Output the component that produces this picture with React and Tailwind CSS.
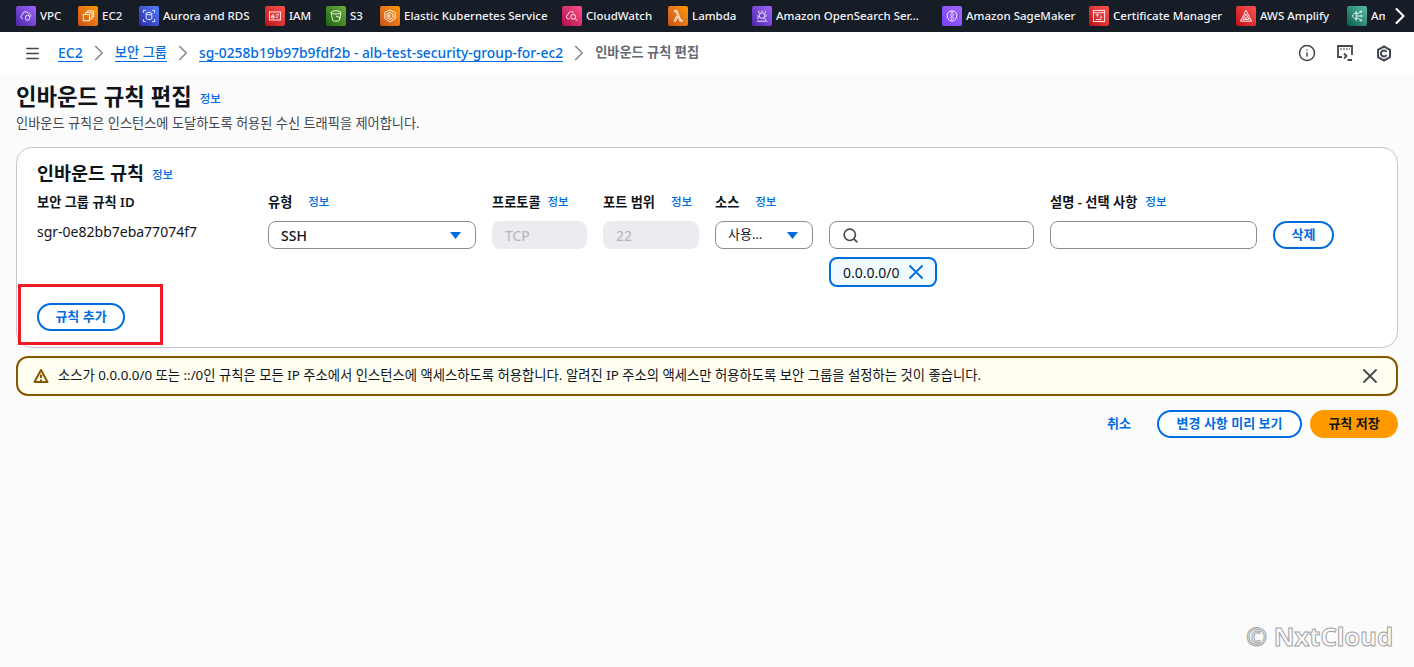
import React from 'react';
import { ChevronRight, X, Search, Menu, Info } from 'lucide-react';

const Font = '[font-family:"Noto_Sans","Noto_Sans_CJK_KR",sans-serif]';

// Service glyphs are simplified versions of the AWS console icons
const glyphs = {
  vpc: (
    <>
      <path d="M6 13.500a2.600 2.600 0 0 1-.4-5.100A4 4 0 0 1 13 6.600a3 3 0 0 1 2.600 4.200" />
      <rect x="9.500" y="9" width="5" height="6.500" rx="2.500" />
    </>
  ),
  ec2: (
    <>
      <rect x="4" y="8" width="8" height="8" />
      <path d="M7 8V5.500h8v8h-3M9.500 5.500V3.500H17v7.500h-2" />
    </>
  ),
  rds: (
    <>
      <ellipse cx="10" cy="7" rx="3.500" ry="1.500" />
      <path d="M6.500 7v6c0 .9 1.600 1.500 3.500 1.500s3.500-.6 3.500-1.500V7M3 6V3h3M17 6V3h-3M3 14v3h3M17 14v3h-3" />
    </>
  ),
  iam: (
    <>
      <rect x="3" y="5" width="14" height="10" />
      <path d="M5.500 12.500v-2h3.500v2zM6.200 10.500V8.600h2.100v1.900M11 8.500h4M11 11.500h3" />
    </>
  ),
  s3: (
    <>
      <path d="M4 5.500c0-1 2.700-2 6-2s6 1 6 2-2.700 2-6 2-6-1-6-2zM4 5.500l1.700 9.500c.3 1 2.200 1.500 4.300 1.500s4-.5 4.300-1.500L16 5.500" />
      <path d="M10 10l6 2.500" />
    </>
  ),
  eks: (
    <>
      <path d="M10 2.500l6.500 3.200v7.500L10 17.500l-6.500-4.300V5.700z" />
      <path d="M10 5.500l3.800 2v4.500L10 14.500 6.200 12V7.500zM8.500 8v4M8.500 10l2.500-2M8.500 10l2.500 2.200" />
    </>
  ),
  cloudwatch: (
    <>
      <path d="M7 13.500H5.500a2.700 2.700 0 0 1-.4-5.300A4 4 0 0 1 12.500 6.500" />
      <circle cx="11.500" cy="11" r="3" />
      <path d="M13.700 13.200l2.800 2.800" />
    </>
  ),
  lambda: <path d="M5 16.500l4.200-8-1.500-4H5.500V3h3l5 12h2v1.500h-3L10 10.500l-3 6z" />,
  opensearch: (
    <>
      <circle cx="10" cy="9.500" r="3.500" />
      <path d="M12.500 12l3 3.500M3.500 16.500h13M6 6.500V3.500M10 5V3M14 6.500V3.500M5 14V9M15 11V8" />
    </>
  ),
  sagemaker: (
    <>
      <path d="M10 3.500C6.500 3.500 4 6 4 9.500c0 3.500 2.500 7 6 7s6-3.500 6-7c0-3.500-2.500-6-6-6z" />
      <path d="M10 3.500v3l-2 2 2 2-2 2 2 2M10 6.500l2 2-2 2 2 2-2 2" />
    </>
  ),
  cert: (
    <>
      <rect x="3" y="3" width="14" height="14" />
      <path d="M3 6h14M6 8.500h4M8 8.500v3M6 14.500h7M12 9.500l1.500 2-2.500 1" />
    </>
  ),
  amplify: <path d="M10 3l7 13.500H3zM10 7.500l-4 7h8zM8 11.500l3.500 3M12 11l-3.500 3.500" />,
  ai: (
    <>
      <path d="M9 4v12M9 6c-2 0-3 1-3 2s-2 1-2 2 1 2 2 2 1 2 3 2" />
      <path d="M9 7h3l2-2M9 10h5M9 13h3l2 2" />
      <circle cx="15" cy="4.500" r="1" />
      <circle cx="15.500" cy="10" r="1" />
      <circle cx="15" cy="15.500" r="1" />
    </>
  ),
};

const services = [
  { name: 'VPC', icon: 'vpc', w: 'w-[46px]', bg: 'bg-gradient-to-tr from-[#4d27a8] to-[#a166ff]' },
  { name: 'EC2', icon: 'ec2', w: 'w-[45px]', bg: 'bg-gradient-to-tr from-[#c8511b] to-[#ff9900]' },
  { name: 'Aurora and RDS', icon: 'rds', w: 'w-[110px]', bg: 'bg-gradient-to-tr from-[#2e27ad] to-[#527fff]' },
  { name: 'IAM', icon: 'iam', w: 'w-[45px]', bg: 'bg-gradient-to-tr from-[#bd0816] to-[#ff5252]' },
  { name: 'S3', icon: 's3', w: 'w-[38px]', bg: 'bg-gradient-to-tr from-[#1b660f] to-[#6cae3e]' },
  { name: 'Elastic Kubernetes Service', icon: 'eks', w: 'w-[166px]', bg: 'bg-gradient-to-tr from-[#c8511b] to-[#ff9900]' },
  { name: 'CloudWatch', icon: 'cloudwatch', w: 'w-[90px]', bg: 'bg-gradient-to-tr from-[#b0084d] to-[#ff4f8b]' },
  { name: 'Lambda', icon: 'lambda', w: 'w-[68px]', bg: 'bg-gradient-to-tr from-[#c8511b] to-[#ff9900]' },
  { name: 'Amazon OpenSearch Ser…', icon: 'opensearch', w: 'w-[174px]', bg: 'bg-gradient-to-tr from-[#4d27a8] to-[#a166ff]' },
  { name: 'Amazon SageMaker', icon: 'sagemaker', w: 'w-[131px]', bg: 'bg-gradient-to-tr from-[#7b3ff2] to-[#a166ff]' },
  { name: 'Certificate Manager', icon: 'cert', w: 'w-[131px]', bg: 'bg-gradient-to-tr from-[#bd0816] to-[#ff5252]' },
  { name: 'AWS Amplify', icon: 'amplify', w: 'w-[95px]', bg: 'bg-gradient-to-tr from-[#bd0816] to-[#ff5252]' },
  { name: 'Amazon Bedrock', icon: 'ai', w: 'w-[120px]', bg: 'bg-gradient-to-tr from-[#055f4e] to-[#56c0a7]' },
];

const ServiceIcon = ({ icon, bg }) => (
  <span className={`w-5 h-5 shrink-0 rounded-[2px] flex items-center justify-center ${bg}`}>
    <svg width="16" height="16" viewBox="0 0 20 20" fill="none" stroke="#fff" strokeWidth="1.100">
      {glyphs[icon]}
    </svg>
  </span>
);

const InfoLink = ({ className = '' }) => (
  <span className={`text-[11.500px] leading-4 font-medium text-[#006ce0] ${className}`}>정보</span>
);

const Label = ({ children, info, gap = 'ml-2' }) => (
  <div className="h-[17px] flex items-center whitespace-nowrap">
    <span className="text-[13.200px] leading-4 font-semibold text-[#0f141a]">{children}</span>
    {info !== false && <InfoLink className={gap} />}
  </div>
);

const Caret = () => (
  <svg width="11" height="7" viewBox="0 0 11 7" className="shrink-0">
    <path d="M0 0h11L5.500 7z" fill="#006ce0" />
  </svg>
);

const fieldBox = 'h-7 mt-[11px] rounded-lg border border-[#8c8c94] bg-white flex items-center';

const Crumb = ({ children, size = 'text-[13.300px]' }) => (
  <span className={`${size} leading-[17px] font-medium text-[#006ce0] border-b-[1.500px] border-[#006ce0] whitespace-nowrap`}>
    {children}
  </span>
);

const Sep = () => <ChevronRight size={26} strokeWidth={1.600} className="text-[#8c8c94] mx-[3px] shrink-0" />;

const RoundButton = ({ children, className = '' }) => (
  <button className={`rounded-full border-2 border-[#006ce0] bg-white text-[#006ce0] text-[13px] font-semibold flex items-center justify-center whitespace-nowrap ${className}`}>
    {children}
  </button>
);

const TopBar = () => (
  <div className="relative h-8 bg-[#161d26] overflow-hidden flex items-center pl-4 gap-4">
    {services.map((s) => (
      <div key={s.name} className={`flex items-center gap-1 shrink-0 ${s.w}`}>
        <ServiceIcon icon={s.icon} bg={s.bg} />
        <span className="text-[11.500px] font-medium text-[#f3f3f7] whitespace-nowrap">{s.name}</span>
      </div>
    ))}
    <div className="absolute right-0 top-0 h-8 w-[29px] bg-[#161d26] flex items-center justify-center">
      <ChevronRight size={28} strokeWidth={1.800} className="text-white" />
    </div>
  </div>
);

const Breadcrumb = () => (
  <div className="h-[42px] bg-white flex items-center pl-6 pr-[22px]">
    <Menu size={17} strokeWidth={2} className="text-[#424650] mr-[17px]" />
    <Crumb size="text-[14px]">EC2</Crumb>
    <Sep />
    <Crumb>보안 그룹</Crumb>
    <Sep />
    <Crumb size="text-[13.800px]">sg-0258b19b97b9fdf2b - alb-test-security-group-for-ec2</Crumb>
    <Sep />
    <span className="text-[13.200px] font-semibold text-[#656871]">인바운드 규칙 편집</span>
    <div className="ml-auto flex items-center text-[#424650]">
      <Info size={18} strokeWidth={2} className="mr-[20px]" />
      <svg width="18" height="18" viewBox="0 0 18 18" fill="none" stroke="currentColor" strokeWidth="1.800" className="mr-[22px]">
        <path d="M6 13H2V2h14v9" />
        <path d="M4.500 5h1M7.500 5h1M10.500 5h1M13.500 5h.5M8 9.500l2.500 2.500L8 14.500M11.500 16h4.500" />
      </svg>
      <svg width="16" height="17" viewBox="0 0 16 17" fill="none" stroke="currentColor" strokeWidth="2">
        <path d="M8 1.500l6 3.300v7.400l-6 3.300-6-3.300V4.800z" />
        <path d="M10.500 7a3 3 0 1 0 0 3" />
      </svg>
    </div>
  </div>
);

const RulesPanel = () => (
  <section className="relative mt-[15px] h-[201px] rounded-2xl border border-[#c6c6cd] bg-white pl-5 pt-[13px]">
    <div className="flex items-center h-[24px]">
      <h2 className="text-[18.500px] leading-6 font-bold text-[#0f141a]">인바운드 규칙</h2>
      <InfoLink className="ml-[8px] mt-[3px]" />
    </div>

    <div className="flex mt-[8px]">
      <div className="w-[231px] shrink-0">
        <Label info={false}>보안 그룹 규칙 ID</Label>
        <div className="mt-[13px] text-[14px] leading-[17px] text-[#0f141a]">sgr-0e82bb7eba77074f7</div>
      </div>
      <div className="w-[208px] shrink-0 mr-4">
        <Label gap="ml-4">유형</Label>
        <div className={`${fieldBox} pl-[12px] pr-[14px] justify-between`}>
          <span className="text-[14px] font-medium text-[#0f141a]">SSH</span>
          <Caret />
        </div>
      </div>
      <div className="w-[95px] shrink-0 mr-4">
        <Label gap="ml-[7px]">프로토콜</Label>
        <div className="h-7 mt-[11px] rounded-lg bg-[#ebebf0] flex items-center px-[13px] text-[14px] text-[#b4b4bb]">TCP</div>
      </div>
      <div className="w-[96px] shrink-0 mr-4">
        <Label gap="ml-4">포트 범위</Label>
        <div className="h-7 mt-[11px] rounded-lg bg-[#ebebf0] flex items-center px-[13px] text-[14px] text-[#b4b4bb]">22</div>
      </div>
      <div className="w-[98px] shrink-0 mr-4">
        <Label gap="ml-4">소스</Label>
        <div className={`${fieldBox} pl-3 pr-[14px] justify-between`}>
          <span className="text-[13px] text-[#0f141a]">사용…</span>
          <Caret />
        </div>
      </div>
      <div className="w-[205px] shrink-0 mr-4">
        <div className="h-[17px]" />
        <div className={`${fieldBox} pl-3`}>
          <Search size={17} strokeWidth={2.300} className="text-[#424650]" />
        </div>
        <div className="mt-[8px] w-[108px] h-[30px] rounded-lg border-2 border-[#006ce0] bg-[#f0fbff] flex items-center pl-3 gap-[4px]">
          <span className="text-[14px] text-[#0f141a]">0.0.0.0/0</span>
          <X size={24} strokeWidth={1.800} className="text-[#006ce0]" />
        </div>
      </div>
      <div className="w-[207px] shrink-0 mr-4">
        <Label>설명 - 선택 사항</Label>
        <div className={fieldBox} />
      </div>
      <div className="shrink-0">
        <div className="h-[17px]" />
        <RoundButton className="mt-[11px] w-[61px] h-7">삭제</RoundButton>
      </div>
    </div>

    <RoundButton className="absolute left-5 top-[155px] w-[88px] h-7">규칙 추가</RoundButton>
  </section>
);

const WarningAlert = () => (
  <div className="mt-2 h-10 rounded-xl border-2 border-[#855900] bg-[#fffef0] flex items-center pl-[15px] pr-[14px]">
    <svg width="16" height="16" viewBox="0 0 16 16" fill="none" stroke="#855900" strokeWidth="2" className="shrink-0">
      <path d="M8 2L1.500 14h13z" strokeLinejoin="round" />
      <path d="M8 6.500v3.500M8 11.500v1.500" />
    </svg>
    <span className="ml-[9px] text-[13.330px] text-[#0f141a] whitespace-nowrap">
      소스가 0.0.0.0/0 또는 ::/0인 규칙은 모든 IP 주소에서 인스턴스에 액세스하도록 허용합니다. 알려진 IP 주소의 액세스만 허용하도록 보안 그룹을 설정하는 것이 좋습니다.
    </span>
    <X size={24} strokeWidth={1.800} className="ml-auto text-[#424650]" />
  </div>
);

const App = () => (
  <div className={`relative h-[667px] overflow-hidden bg-[#fbfbfc] ${Font}`}>
    <TopBar />
    <Breadcrumb />

    <main className="px-4 pt-[9px] pr-4">
      <div className="flex items-center h-[28px]">
        <h1 className="text-[22.300px] leading-7 font-bold text-[#0f141a]">인바운드 규칙 편집</h1>
        <InfoLink className="ml-2 mt-[3px]" />
      </div>
      <p className="mt-[3px] text-[13.200px] leading-[18px] text-[#424650]">
        인바운드 규칙은 인스턴스에 도달하도록 허용된 수신 트래픽을 제어합니다.
      </p>

      <RulesPanel />
      <WarningAlert />

      <div className="mt-[14px] flex items-center justify-end">
        <span className="text-[13px] font-semibold text-[#006ce0] mr-[26px]">취소</span>
        <RoundButton className="w-[145px] h-7 mr-[8px]">변경 사항 미리 보기</RoundButton>
        <button className="w-[88px] h-7 rounded-full bg-[#ff9900] text-[13px] font-semibold text-[#0f141a] whitespace-nowrap">
          규칙 저장
        </button>
      </div>
    </main>

    {/* red annotation box around the add-rule button */}
    <div className="absolute left-[18px] top-[284px] w-[145px] h-[61px] border-[3px] border-[#ed1c24]" />

    {/* outlined watermark */}
    <div className="absolute right-[21px] top-[618px] text-[25.500px] leading-9 font-bold text-transparent [-webkit-text-stroke:1px_#a3a3a3] whitespace-nowrap">
      © NxtCloud
    </div>
  </div>
);

export default App;
